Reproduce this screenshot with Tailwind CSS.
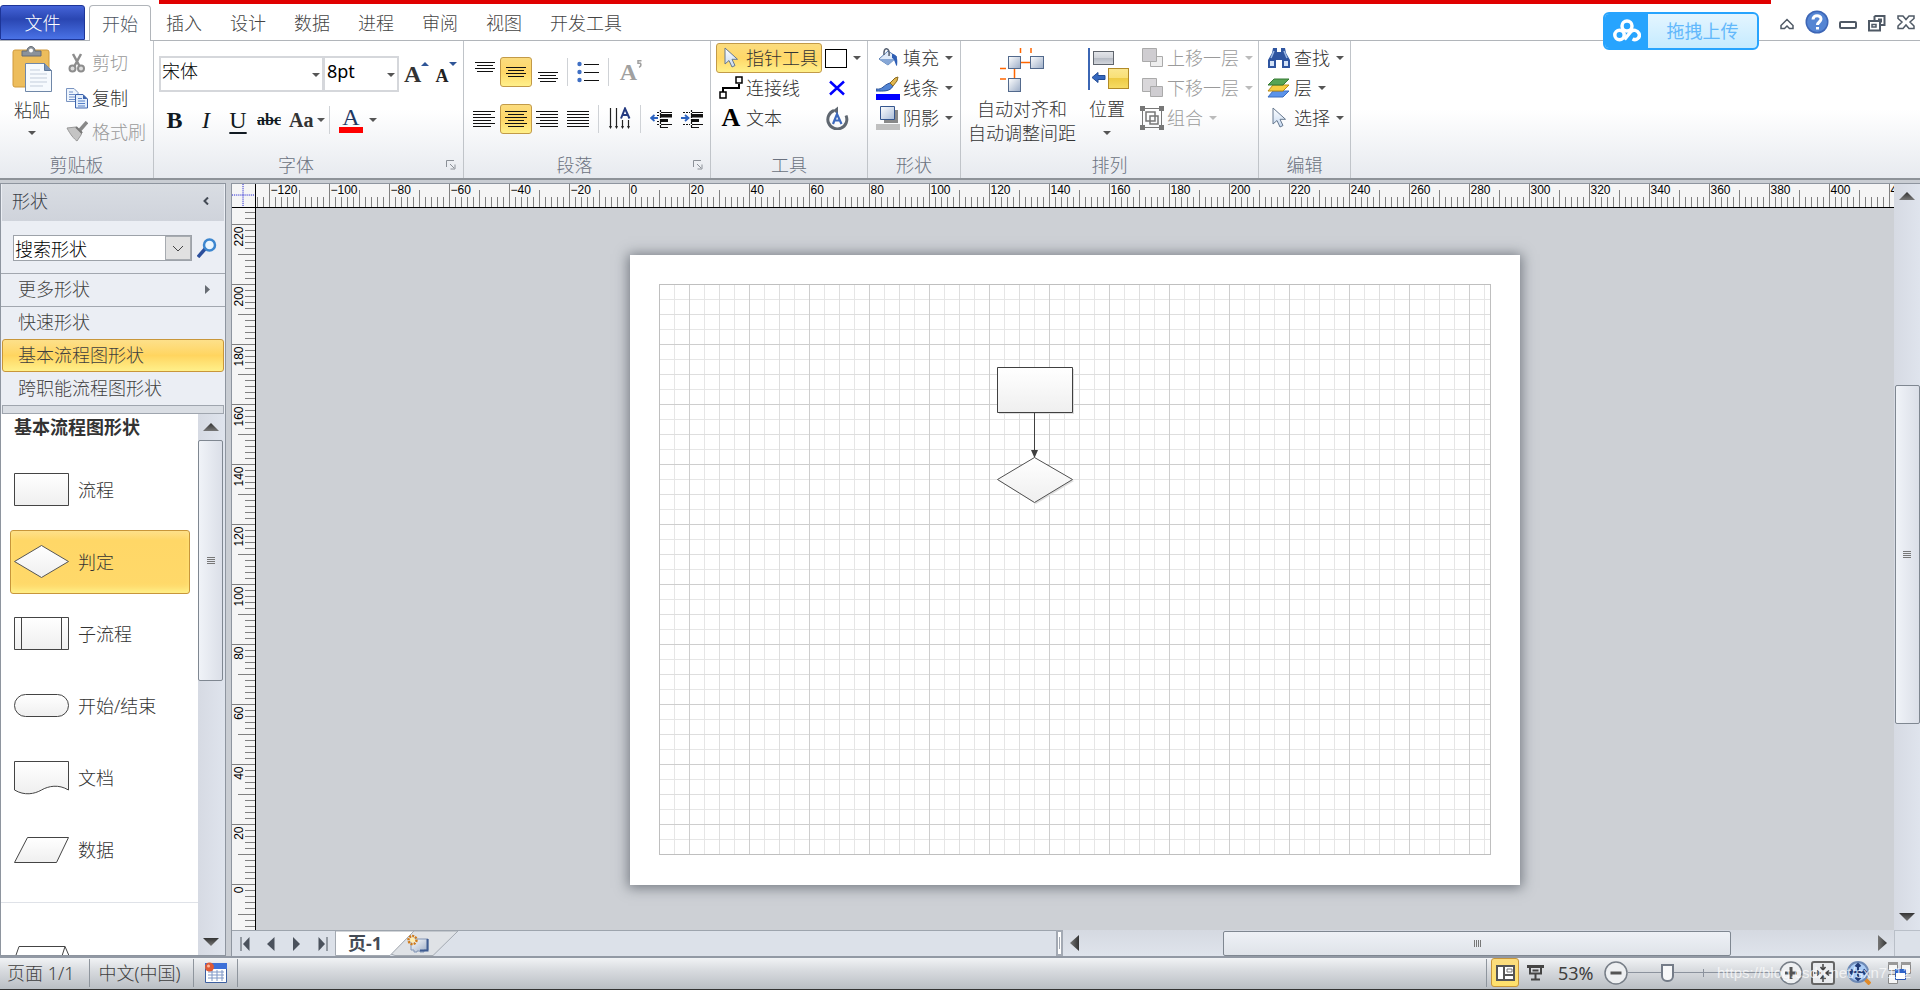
<!DOCTYPE html>
<html lang="zh-CN">
<head>
<meta charset="utf-8">
<title>Visio 流程图</title>
<script src="https://cdn.jsdelivr.net/npm/@tailwindcss/browser@4"></script>
</head>
<body class="relative flex h-screen flex-col overflow-hidden bg-white font-['Noto_Sans','Noto_Sans_CJK_SC',sans-serif] text-lg font-light leading-6 text-[#333]">

<svg class="absolute size-0" aria-hidden="true">
  <defs>
    <linearGradient id="gShape" x1="0" y1="0" x2="0" y2="1"><stop offset="0" stop-color="#fff"/><stop offset="1" stop-color="#efefef"/></linearGradient>
    <linearGradient id="gBlue" x1="0" y1="0" x2="1" y2="1"><stop offset="0" stop-color="#fff"/><stop offset="1" stop-color="#a9bcd8"/></linearGradient>
    <linearGradient id="gGray" x1="0" y1="0" x2="0" y2="1"><stop offset="0" stop-color="#e4e6ea"/><stop offset=".5" stop-color="#d0d3d9"/><stop offset=".5" stop-color="#b4b9c2"/><stop offset="1" stop-color="#d5d8dd"/></linearGradient>
    <linearGradient id="gCursor" x1="0" y1="0" x2="0" y2="1"><stop offset="0" stop-color="#fff"/><stop offset="1" stop-color="#c5d8f0"/></linearGradient>
    <linearGradient id="gGold" x1="0" y1="0" x2="0" y2="1"><stop offset="0" stop-color="#fbe78f"/><stop offset=".5" stop-color="#f8df74"/><stop offset=".5" stop-color="#eecb45"/><stop offset="1" stop-color="#f6dc66"/></linearGradient>
    <linearGradient id="gDarkH" x1="0" y1="0" x2="1" y2="0"><stop offset="0" stop-color="#777"/><stop offset="1" stop-color="#333"/></linearGradient>
    <linearGradient id="gDarkV" x1="0" y1="0" x2="0" y2="1"><stop offset="0" stop-color="#333"/><stop offset="1" stop-color="#777"/></linearGradient>
    <linearGradient id="gSq" x1="0" y1="0" x2="1" y2="1"><stop offset="0" stop-color="#fff"/><stop offset="1" stop-color="#9bacc6"/></linearGradient>
    <symbol id="dd" viewBox="0 0 8 4"><path d="M0 0h8L4 4z" fill="currentColor"/></symbol>
    <symbol id="cursor" viewBox="0 0 16 22"><path d="M2 1v16l4-3.500 3 6.500 3-1.500-3-6.200h5.500z" fill="url(#gCursor)" stroke="#66788f"/></symbol>
    <symbol id="launch" viewBox="0 0 10 10"><path d="M.5 7V.5H8M4 4l4 4M9 4.500V9H4.500" fill="none" stroke="#8b9097"/></symbol>
  </defs>
</svg>

<!-- Tab strip -->
<header class="flex h-[41px] shrink-0 items-end border-b border-[#b1b5ba] bg-white">
  <button class="h-[35px] w-[85px] self-end rounded-t-[3px] border border-[#1d3598] bg-linear-to-b from-[#4564d8] via-[#2a46b2] via-40% to-[#4a72e6] text-white">文件</button>
  <nav class="ml-1 flex items-end">
    <button class="-mb-px h-9 w-[62px] rounded-t-[4px] border border-b-0 border-[#b1b5ba] bg-white text-[#4d5561]">开始</button>
    <button class="ml-[15px] h-9 pt-0.5 text-[#444]">插入</button>
    <button class="ml-7 h-9 pt-0.5 text-[#444]">设计</button>
    <button class="ml-7 h-9 pt-0.5 text-[#444]">数据</button>
    <button class="ml-7 h-9 pt-0.5 text-[#444]">进程</button>
    <button class="ml-7 h-9 pt-0.5 text-[#444]">审阅</button>
    <button class="ml-7 h-9 pt-0.5 text-[#444]">视图</button>
    <button class="ml-7 h-9 pt-0.5 text-[#444]">开发工具</button>
  </nav>
  <div class="ml-auto flex h-9 items-center gap-[10px] pr-[5px]">
    <button aria-label="折叠功能区"><svg class="h-6 w-4" viewBox="0 0 16 24"><path d="M2 18.500v-3L8 9.500l6 6v3h-3.500L8 16l-2.500 2.500z" fill="#fff" stroke="#4f5965" stroke-width="1.500"/></svg></button>
    <button aria-label="帮助"><svg class="size-6" viewBox="0 0 24 24"><circle cx="12" cy="12" r="11.500" fill="#3d66b6"/><circle cx="12" cy="12" r="10" fill="#5585d3"/><path d="M8 9.500C8 4.500 16 4.500 16 9c0 3-3.500 3-3.500 6M12.500 17v2.500" fill="none" stroke="#fff" stroke-width="3"/></svg></button>
    <button aria-label="最小化"><svg class="h-6 w-[18px]" viewBox="0 0 18 24"><rect x="1" y="12" width="16" height="6" rx="1" fill="#fff" stroke="#4f5965" stroke-width="2"/></svg></button>
    <button aria-label="还原"><svg class="h-6 w-5" viewBox="0 0 20 24"><path d="M7.500 6h10v9h-4M7.500 6v5M11 9.500h3v3" fill="none" stroke="#4f5965" stroke-width="2"/><path d="M2 11h11v9.500H2z" fill="#fff" stroke="#4f5965" stroke-width="2"/><path d="M5 14.500h4v2.500H5z" fill="#fff" stroke="#4f5965" stroke-width="1.500"/></svg></button>
    <button aria-label="关闭"><svg class="h-6 w-[18px]" viewBox="0 0 18 24"><path d="M1 6h5l3 3.500L12 6h5v2.500L13 12l4 4v2.500h-5L9 15l-3 3.500H1V16l4-4-4-3.500z" fill="#fff" stroke="#4f5965" stroke-width="1.500"/></svg></button>
  </div>
</header>
<div class="absolute top-0 right-[149px] left-[159px] h-1 bg-[#e00000]"></div>
<button class="absolute top-3 right-[161px] flex h-[38px] w-[156px] items-center overflow-hidden rounded-md border-2 border-[#27a4fe] bg-linear-to-b from-[#e4f5ff] to-[#c5ebff] text-[#62b8fb]">
  <span class="flex h-full w-[43px] shrink-0 items-center justify-center bg-[#27a4fe]"><svg class="h-6 w-7" viewBox="0 0 28 24"><g fill="none" stroke="#fff" stroke-width="3.500"><circle cx="14" cy="7" r="5"/><circle cx="6.500" cy="16" r="4.700"/><path d="M11.500 20.500l6.500-8c2-2.200 6.500-1.500 8 2 1.500 4-2.500 7.500-6.500 5.500"/></g></svg></span>
  <span class="flex-1 text-center font-normal">拖拽上传</span>
</button>

<!-- Ribbon -->
<section class="flex h-[139px] shrink-0 border-b-2 border-[#8d9298] bg-linear-to-b from-white from-50% to-[#e7eaef]">
  <div class="flex w-[154px] shrink-0 flex-col border-r border-[#c0c4c9]">
    <div class="flex h-[110px] pt-[5px] pl-3">
      <button class="flex w-10 flex-col items-center">
        <svg class="h-[47px] w-[42px] shrink-0" viewBox="0 0 42 47"><rect x="2" y="4" width="36" height="37" rx="2" fill="#edbd5c" stroke="#d09a3c"/><path d="M11 10V5h5c0-6 8-6 8 0h6v5z" fill="#8b929b" stroke="#666d76"/><circle cx="20" cy="4.500" r="2" fill="#fff"/><path d="M14.500 17.500h19l7 7v21h-26z" fill="#f6fafe" stroke="#6f87a8"/><path d="M33.500 17.500v7h7" fill="#7b93b5" stroke="#5f7898"/><path d="M19 24h10M19 28h17M19 32h17M19 36h17M19 40h13" stroke="#c3cddb"/></svg>
        <span class="h-[34px] leading-[34px]">粘贴</span>
        <svg class="mt-1 h-1 w-2 text-[#555]"><use href="#dd"/></svg>
      </button>
      <div class="ml-[14px] flex flex-col text-[#9a9a9a]">
        <button class="flex h-[34px] items-center gap-1"><svg class="size-[22px]" viewBox="0 0 22 22"><path d="M7 2l6.500 12M15 2L8.500 14" stroke="#8d8d8d" stroke-width="2.500"/><circle cx="6.500" cy="16.500" r="3" fill="#ddd" stroke="#8d8d8d" stroke-width="2"/><circle cx="15" cy="16.500" r="3" fill="#ddd" stroke="#8d8d8d" stroke-width="2"/></svg>剪切</button>
        <button class="flex h-[35px] items-center gap-1 text-[#333]"><svg class="size-[22px]" viewBox="0 0 22 22"><path d="M.5 1.500H8l4 4v9H.5z" fill="#eef5fd" stroke="#7993c0"/><path d="M3 5h4M3 7.500h6M3 10h6M3 12.500h6" stroke="#6f8fc9"/><path d="M9.500 7.500H17l4.500 4.500v9h-12z" fill="#e3eefb" stroke="#3d64ad"/><path d="M17 7.500V12h4.500" fill="#3d64ad"/><path d="M12 11.500h4M12 14h7M12 16.500h7M12 19h7" stroke="#5780c8"/></svg>复制</button>
        <button class="flex h-[34px] items-center gap-1"><svg class="size-[22px]" viewBox="0 0 22 22"><path d="M21 1l-7 8" stroke="#888" stroke-width="3.500"/><path d="M1 7l9-1 6 5-1 3-4 6c-3-2-7-7-10-13z" fill="#c4c4c4" stroke="#999"/><path d="M10 6l6 6" stroke="#777" stroke-width="2"/></svg>格式刷</button>
      </div>
    </div>
    <div class="flex h-7 items-center justify-center pt-0.5 text-[#6b7280]">剪贴板</div>
  </div>

  <div class="flex w-[310px] shrink-0 flex-col border-r border-[#c0c4c9]">
    <div class="h-[110px] pt-[15px] pl-[5px]">
      <div class="flex text-black">
        <label class="relative"><select aria-label="字体" class="h-9 w-[165px] appearance-none border-2 border-[#d5d7db] bg-white pb-1.5 pl-px"><option>宋体</option></select><svg class="absolute top-[17px] right-1 h-1 w-2 text-[#555]"><use href="#dd"/></svg></label>
        <label class="relative -ml-px"><select aria-label="字号" class="h-9 w-[76px] appearance-none border-2 border-[#d5d7db] bg-white pb-1.5 pl-0.5 font-normal"><option>8pt</option></select><svg class="absolute top-[17px] right-1 h-1 w-2 text-[#555]"><use href="#dd"/></svg></label>
        <button class="ml-[5px] flex h-9 w-7 items-center font-['Liberation_Serif',serif] text-2xl font-bold text-[#333]">A<svg class="mb-5 h-1 w-2 rotate-180 text-[#2f5597]"><use href="#dd"/></svg></button>
        <button class="ml-1 flex h-9 w-7 items-center font-['Liberation_Serif',serif] text-lg font-bold text-[#222]"><span class="mt-1">A</span><svg class="mb-5 h-1 w-2 text-[#2f5597]"><use href="#dd"/></svg></button>
      </div>
      <div class="mt-[13px] flex h-[30px] items-center font-['Liberation_Serif',serif] text-2xl text-[#111a22]">
        <button class="w-[31px] font-bold">B</button><button class="w-8 font-normal italic">I</button><button class="w-8 font-normal underline underline-offset-4">U</button><button class="w-[30px] text-base font-bold line-through">abc</button>
        <button class="ml-[5px] flex w-10 items-center gap-1 text-xl font-bold text-[#333]">Aa<svg class="h-1 w-2 text-[#555]"><use href="#dd"/></svg></button>
        <span class="h-7 w-px bg-[#cfd2d6]"></span>
        <button class="ml-[9px] flex w-10 items-center gap-1.5"><span class="flex w-6 shrink-0 flex-col items-center border-b-[6px] border-[#f00] text-2xl leading-5 font-normal text-[#1f3864]">A</span><svg class="h-1 w-2 shrink-0 text-[#555]"><use href="#dd"/></svg></button>
      </div>
    </div>
    <div class="flex h-7 items-center pt-0.5 text-[#6b7280]"><span class="flex-1 pr-2 text-center">字体</span><button aria-label="字体设置" class="mr-[7px]"><svg class="size-[10px]"><use href="#launch"/></svg></button></div>
  </div>

  <div class="flex w-[247px] shrink-0 flex-col border-r border-[#c0c4c9]">
    <div class="h-[110px] pt-4 pl-[5px]">
      <div class="flex h-[30px] items-center">
        <button aria-label="顶端对齐" class="flex w-[31px] justify-center"><svg class="h-[22px] w-5" viewBox="0 0 20 22"><path d="M0 1.500h20M2 4.500h16M0 7.500h20M2 10.500h16" stroke="#111" stroke-width="1.200"/></svg></button>
        <button aria-label="中部对齐" class="flex h-[30px] w-8 items-center justify-center rounded-[3px] border border-[#c29a48] bg-linear-to-b from-[#fbdc7e] via-[#ffd767] to-[#fff08a]"><svg class="h-[22px] w-5" viewBox="0 0 20 22"><path d="M0 6.500h20M2 9.500h16M0 12.500h20M2 15.500h16" stroke="#111" stroke-width="1.200"/></svg></button>
        <button aria-label="底端对齐" class="flex w-[31px] justify-center"><svg class="h-[22px] w-5" viewBox="0 0 20 22"><path d="M0 11.500h20M2 14.500h16M0 17.500h20M2 20.500h16" stroke="#111" stroke-width="1.200"/></svg></button>
        <span class="mx-1 h-7 w-px bg-[#cfd2d6]"></span>
        <button aria-label="项目符号" class="flex w-8 justify-center"><svg class="h-[22px] w-[22px]" viewBox="0 0 22 22"><g fill="#3f6fc4"><circle cx="2.500" cy="3" r="2.200"/><circle cx="2.500" cy="11" r="2.200"/><circle cx="2.500" cy="19" r="2.200"/></g><path d="M7 3.500h15M7 11.500h15M7 19.500h15" stroke="#111" stroke-width="1.200"/></svg></button>
        <span class="mx-1 h-7 w-px bg-[#cfd2d6]"></span>
        <button aria-label="文字旋转" class="flex w-9 items-center justify-center font-['Liberation_Serif',serif] text-2xl font-bold text-[#a0a0a0]">A<svg class="mb-4 h-2 w-[5px]" viewBox="0 0 5 8"><path d="M4.500.8H1v2.500h2.500c1 2-.5 3.500-1.500 4" fill="none" stroke="#a0a0a0" stroke-width="1.500"/></svg></button>
      </div>
      <div class="mt-[17px] flex h-[30px] items-center">
        <button aria-label="左对齐" class="flex w-[31px] justify-center pr-0.5"><svg class="h-[18px] w-[22px]" viewBox="0 0 22 18"><path d="M0 1.500h22M0 4.500h18M0 7.500h22M0 10.500h18M0 13.500h22M0 16.500h18" stroke="#111" stroke-width="1.200"/></svg></button>
        <button aria-label="居中" class="flex h-[30px] w-8 items-center justify-center rounded-[3px] border border-[#c29a48] bg-linear-to-b from-[#fbdc7e] via-[#ffd767] to-[#fff08a]"><svg class="h-[18px] w-[22px]" viewBox="0 0 22 18"><path d="M0 1.500h22M3 4.500h16M0 7.500h22M3 10.500h16M0 13.500h22M3 16.500h16" stroke="#111" stroke-width="1.200"/></svg></button>
        <button aria-label="右对齐" class="flex w-[31px] justify-center pr-0.5"><svg class="h-[18px] w-[22px]" viewBox="0 0 22 18"><path d="M0 1.500h22M4 4.500h18M0 7.500h22M4 10.500h18M0 13.500h22M4 16.500h18" stroke="#111" stroke-width="1.200"/></svg></button>
        <button aria-label="两端对齐" class="flex w-[31px] justify-center pr-0.5"><svg class="h-[18px] w-[22px]" viewBox="0 0 22 18"><path d="M0 1.500h22M0 4.500h22M0 7.500h22M0 10.500h22M0 13.500h22M0 16.500h22" stroke="#111" stroke-width="1.200"/></svg></button>
        <span class="mx-1 h-7 w-px bg-[#cfd2d6]"></span>
        <button aria-label="文字方向" class="flex w-[33px] justify-center"><svg class="h-6 w-[22px]" viewBox="0 0 22 24"><path d="M1.500 1v20M7.500 1v20M13.500 13v8M19.500 13v8" stroke="#222" stroke-width="1.200"/><path d="M0 19h3l-1.500 3zM6 19h3l-1.500 3zM12 19h3l-1.500 3zM18 19h3l-1.500 3z" fill="#222"/><path d="M12 11.500l4-10 4.500 10M13.500 8h5" fill="none" stroke="#243a80" stroke-width="2"/></svg></button>
        <span class="mx-1 h-7 w-px bg-[#cfd2d6]"></span>
        <button aria-label="减少缩进" class="flex w-[31px] justify-center"><svg class="h-[18px] w-[22px]" viewBox="0 0 22 18"><path d="M7 2.500h2M7 14.500h2M7 11.500h2M7 5.500h2M10.500 0v18" stroke="#111" stroke-width="1.200" stroke-dasharray="2 1"/><path d="M11 2.500h11M11 14.500h11M10 17.500h8" stroke="#111"/><path d="M10 4h12v3.500H10zM10 9h8v3h-8z" fill="#111"/><path d="M8 8H2M4.500 5L1 8l3.500 3" stroke="#2c63c0" stroke-width="1.800" fill="none"/></svg></button>
        <button aria-label="增加缩进" class="flex w-[31px] justify-center"><svg class="h-[18px] w-[22px]" viewBox="0 0 22 18"><path d="M2 2.500h7M2 14.500h7M10.500 0v18" stroke="#111" stroke-width="1.200" stroke-dasharray="2 1"/><path d="M11 2.500h11M11 14.500h11M10 17.500h8" stroke="#111"/><path d="M10 4h12v3.500H10zM10 9h8v3h-8z" fill="#111"/><path d="M0 8h6M4 5l3.500 3L4 11" stroke="#2c63c0" stroke-width="1.800" fill="none"/></svg></button>
      </div>
    </div>
    <div class="flex h-7 items-center pt-0.5 text-[#6b7280]"><span class="flex-1 pr-2 text-center">段落</span><button aria-label="段落设置" class="mr-[7px]"><svg class="size-[10px]"><use href="#launch"/></svg></button></div>
  </div>

  <div class="flex w-[157px] shrink-0 flex-col border-r border-[#c0c4c9]">
    <div class="flex h-[110px] gap-[3px] pt-0.5 pl-[5px]">
      <div class="flex w-[106px] flex-col">
        <button class="flex h-[30px] items-center gap-[3px] rounded-[3px] border border-[#c29a48] bg-linear-to-b from-[#fbdc7e] via-[#ffd767] to-[#fff08a] pl-0.5"><svg class="h-[22px] w-6"><use href="#cursor"/></svg>指针工具</button>
        <button class="flex h-[30px] items-center gap-[3px] pl-[3px]"><svg class="size-6" viewBox="0 0 24 24"><path d="M4 16v-4h16V8" fill="none" stroke="#000" stroke-width="2"/><rect x="1" y="16" width="6" height="6" fill="#fff" stroke="#000" stroke-width="1.500"/><rect x="17" y="1" width="6" height="6" fill="#fff" stroke="#000" stroke-width="1.500"/></svg>连接线</button>
        <button class="flex h-[30px] items-center gap-[3px] pl-[3px]"><span class="w-6 text-center font-['Liberation_Serif',serif] text-[26px] font-bold text-black">A</span>文本</button>
      </div>
      <div class="flex flex-col">
        <button aria-label="矩形" class="flex h-[30px] items-center gap-1.5"><span class="h-[19px] w-[22px] border border-black bg-white"></span><svg class="h-1 w-2 text-[#555]"><use href="#dd"/></svg></button>
        <button aria-label="连接点" class="flex h-[30px] w-6 items-center justify-center"><svg class="size-4" viewBox="0 0 16 16"><path d="M1 1.500l14 13M15 1.500l-14 13" stroke="#00f" stroke-width="2.500"/></svg></button>
        <button aria-label="旋转文本" class="flex h-[30px] w-6 items-center justify-center"><svg class="size-6" viewBox="0 0 24 24"><path d="M9 4.500a9.500 9.500 0 1 0 12 5" fill="none" stroke="#5f6770" stroke-width="3"/><path d="M8 4.500l5-4v8z" fill="#5f6770"/><path d="M8 18l4-10 4.500 10M9.500 14.500h5.500" fill="none" stroke="#3c69bd" stroke-width="2.200"/></svg></button>
      </div>
    </div>
    <div class="flex h-7 items-center justify-center pt-0.5 text-[#6b7280]">工具</div>
  </div>

  <div class="flex w-[93px] shrink-0 flex-col border-r border-[#c0c4c9]">
    <div class="flex h-[110px] flex-col pt-0.5 pl-2">
      <button class="flex h-[30px] items-center gap-[3px]"><svg class="size-6" viewBox="0 0 24 24"><path d="M3 13l9-8 9 6-9 8z" fill="#dfeaf8" stroke="#5b7fb4"/><path d="M3 13h16l-7 6z" fill="#86a7d6"/><path d="M8 9c-1-9 6-8 5 1" fill="none" stroke="#555f70" stroke-width="1.500"/><path d="M16 8c5 0 6 5 5 12-2-1-2-7-5-8z" fill="#2f5fb5"/></svg>填充<svg class="ml-[3px] h-1 w-2 text-[#555]"><use href="#dd"/></svg></button>
      <button class="flex h-[30px] items-center gap-[3px]"><svg class="size-6" viewBox="0 0 24 24"><path d="M0 13c7 1 7-4 14-6l3 3c-3 6-10 5-17 5z" fill="#5184d3" stroke="#2b5298"/><path d="M14 7l5-5 3-1-1 4-4 5z" fill="#e0b64f" stroke="#8a6a20"/><path d="M0 18h24v6H0z" fill="#00f"/></svg>线条<svg class="ml-[3px] h-1 w-2 text-[#555]"><use href="#dd"/></svg></button>
      <button class="flex h-[30px] items-center gap-[3px]"><svg class="size-6" viewBox="0 0 24 24"><path d="M8 4h14v13H8z" fill="#888"/><path d="M4.500.5h14v13h-14z" fill="url(#gBlue)" stroke="#35568f"/><path d="M0 18h24v6H0z" fill="#c0c0c0"/></svg>阴影<svg class="ml-[3px] h-1 w-2 text-[#555]"><use href="#dd"/></svg></button>
    </div>
    <div class="flex h-7 items-center justify-center pt-0.5 text-[#6b7280]">形状</div>
  </div>

  <div class="flex w-[298px] shrink-0 flex-col border-r border-[#c0c4c9]">
    <div class="flex h-[110px] pl-[7px]">
      <button class="flex w-[108px] flex-col items-center pt-[7px]">
        <svg class="mb-1 h-[45px] w-[44px] shrink-0" viewBox="0 0 44 45"><path d="M20.500 0v5M31 0v5M20 14.500h10M14.500 20v10M0 20.500h6M0 31h6" stroke="#f60" stroke-width="1.500"/><g fill="url(#gSq)" stroke="#52698c"><rect x="8.500" y="8.500" width="12" height="12"/><rect x="30.500" y="8.500" width="13" height="12"/><rect x="8.500" y="30.500" width="12" height="13"/></g></svg>
        <span>自动对齐和</span><span class="whitespace-nowrap">自动调整间距</span>
      </button>
      <button class="ml-[9px] flex w-11 flex-col items-center pt-[7px]">
        <svg class="mb-[7px] ml-1 h-[42px] w-[42px] shrink-0" viewBox="0 0 42 42"><path d="M1 0v42" stroke="#3b66b4" stroke-width="2"/><rect x="5.500" y="3.500" width="20" height="13" fill="url(#gGray)" stroke="#60656d"/><rect x="20.500" y="20.500" width="20" height="20" fill="url(#gGold)" stroke="#b18a28"/><path d="M4 29.500l6-5v3h7v4h-7v3z" fill="#3568bf" stroke="#234c94"/></svg>
        <span>位置</span><svg class="mt-[10px] h-1 w-2 shrink-0 text-[#555]"><use href="#dd"/></svg>
      </button>
      <div class="ml-[11px] flex flex-col pt-0.5 text-[#9a9a9a]">
        <button class="flex h-[30px] items-center gap-[3px]"><svg class="size-6" viewBox="0 0 24 24"><path d="M10.500 10.500h12v10h-12z" fill="#eee" stroke="#aaa"/><path d="M2.500 2.500h14v13h-14z" fill="#cfcdd1" stroke="#aaa"/></svg>上移一层<svg class="ml-[3px] h-1 w-2 text-[#bbb]"><use href="#dd"/></svg></button>
        <button class="flex h-[30px] items-center gap-[3px]"><svg class="size-6" viewBox="0 0 24 24"><path d="M2.500 2.500h14v13h-14z" fill="#d9d7da" stroke="#aaa"/><path d="M10.500 10.500h12v10h-12z" fill="#cfcdd1" stroke="#aaa"/></svg>下移一层<svg class="ml-[3px] h-1 w-2 text-[#bbb]"><use href="#dd"/></svg></button>
        <button class="flex h-[30px] items-center gap-[3px]"><svg class="size-6" viewBox="0 0 24 24"><path d="M2.500 2.500h19v19h-19z" fill="none" stroke="#777"/><path d="M6 6h9v9H6zM10 10h8v8h-8z" fill="none" stroke="#777" stroke-width="1.500"/><path d="M0 0h5v5H0zM19 0h5v5h-5zM0 19h5v5H0zM19 19h5v5h-5z" fill="#777"/></svg>组合<svg class="ml-[3px] h-1 w-2 text-[#bbb]"><use href="#dd"/></svg></button>
      </div>
    </div>
    <div class="flex h-7 items-center justify-center pt-0.5 text-[#6b7280]">排列</div>
  </div>

  <div class="flex w-[92px] shrink-0 flex-col border-r border-[#c0c4c9]">
    <div class="flex h-[110px] flex-col pt-0.5 pl-2">
      <button class="flex h-[30px] items-center gap-[3px]"><svg class="size-6" viewBox="0 0 24 24"><path d="M6 2h4v4h4V2h4l1 5 4 7v8h-8v-8H9v8H1v-8l4-7z" fill="#2f55a0"/><path d="M3 15h4v5H3zM17 15h4v5h-4z" fill="#d4e3f7"/><path d="M7 5l-3 7M17 5l3 7" stroke="#9db9e4" stroke-width="1.500"/></svg>查找<svg class="ml-[3px] h-1 w-2 text-[#555]"><use href="#dd"/></svg></button>
      <button class="flex h-[30px] items-center gap-[3px]"><svg class="size-6" viewBox="0 0 24 24"><path d="M6 15h16l-6 6H1z" fill="#5b93ea" stroke="#3a6cc0"/><path d="M6 9h16l-6 6H1z" fill="#f6cd42" stroke="#b98b16"/><path d="M7 3h15l-6 6H1z" fill="#58a455" stroke="#347a34"/></svg>层<svg class="ml-[3px] h-1 w-2 text-[#555]"><use href="#dd"/></svg></button>
      <button class="flex h-[30px] items-center gap-[3px]"><svg class="h-[22px] w-6"><use href="#cursor"/></svg>选择<svg class="ml-[3px] h-1 w-2 text-[#555]"><use href="#dd"/></svg></button>
    </div>
    <div class="flex h-7 items-center justify-center pt-0.5 text-[#6b7280]">编辑</div>
  </div>
</section>

<!-- Work area -->
<main class="flex min-h-0 flex-1 gap-[5px] bg-[#c9cdd3] pt-[3px]">
  <aside class="flex w-[226px] shrink-0 flex-col border border-[#8e959f] bg-[#ebeef4]">
    <div class="mx-px flex h-[37px] shrink-0 items-center justify-between bg-linear-to-b from-[#d9dde3] to-[#cfd3db] pr-[15px] pb-1 pl-[10px] text-[#3b4048]">形状<button aria-label="最小化形状窗口"><svg class="h-2 w-1.5" viewBox="0 0 6 8"><path d="M5 .5L1.500 4 5 7.500" fill="none" stroke="#444b55" stroke-width="2"/></svg></button></div>
    <div class="flex h-[53px] shrink-0 items-center border-b border-[#a2a7af] pt-0.5 pl-3">
      <div class="flex h-[26px] w-[179px] border border-[#9da2a9] bg-white">
        <input aria-label="搜索形状" value="搜索形状" class="min-w-0 flex-1 bg-white pt-0.5 pl-px text-black outline-none">
        <button aria-label="展开" class="flex w-[26px] items-center justify-center border border-[#a7abb0] bg-[#e1e1e1]"><svg class="h-[7px] w-3" viewBox="0 0 12 7"><path d="M1 1l5 5 5-5" fill="none" stroke="#444"/></svg></button>
      </div>
      <button aria-label="搜索" class="ml-[5px]"><svg class="size-5" viewBox="0 0 20 20"><path d="M1 19l7-8" stroke="#2b4f9c" stroke-width="3.500"/><circle cx="12.500" cy="7" r="5.500" fill="#eaf6ff" stroke="#3c86cf" stroke-width="2.500"/></svg></button>
    </div>
    <button class="flex h-[33px] shrink-0 items-center justify-between border-b border-[#a2a7af] pr-[15px] pb-0.5 pl-[17px] text-[#3f3f3f]">更多形状<svg class="h-[9px] w-[5px]" viewBox="0 0 5 9"><path d="M0 0v9l5-4.500z" fill="#666b72"/></svg></button>
    <button class="h-8 shrink-0 pb-0.5 pl-[17px] text-left text-[#3f3f3f]">快速形状</button>
    <button class="mx-px h-[33px] shrink-0 rounded-[3px] border border-[#c8963a] bg-linear-to-b from-[#fde08a] via-[#ffd55f] to-[#fff08a] pb-0.5 pl-[15px] text-left text-[#3f3f3f]">基本流程图形状</button>
    <button class="h-[33px] shrink-0 pb-0.5 pl-[17px] text-left text-[#3f3f3f]">跨职能流程图形状</button>
    <div class="mx-px h-[9px] shrink-0 border border-[#9fa5ae] bg-[#dadee4]"></div>
    <div class="flex min-h-0 flex-1">
      <div class="flex w-[197px] flex-col overflow-hidden bg-white">
        <h2 class="mb-[18px] h-[26px] shrink-0 pl-[13px] leading-[26px] font-bold">基本流程图形状</h2>
        <div class="flex shrink-0 flex-col gap-2 pl-[9px]">
          <button class="flex h-16 w-[180px] items-center gap-[7px] pl-1"><svg class="h-[35px] w-[57px]" viewBox="0 0 57 35"><path d="M.5.5h54v32H.5z" fill="url(#gShape)" stroke="#444"/></svg>流程</button>
          <button class="flex h-16 w-[180px] items-center gap-[7px] rounded-[3px] border border-[#c8963a] bg-linear-to-b from-[#fee08a] via-[#ffd767] via-15% to-[#ffd96a] pl-[3px] shadow-[inset_0_-6px_6px_-2px_#fff08a]"><svg class="h-[35px] w-[57px]" viewBox="0 0 57 35"><path d="M27.500.5l27 16-27 16-27-16z" fill="url(#gShape)" stroke="#555"/></svg>判定</button>
          <button class="flex h-16 w-[180px] items-center gap-[7px] pl-1"><svg class="h-[35px] w-[57px]" viewBox="0 0 57 35"><path d="M.5.5h54v32H.5zM7.500.5v32M47.500.5v32" fill="url(#gShape)" stroke="#444"/></svg>子流程</button>
          <button class="flex h-16 w-[180px] items-center gap-[7px] pl-1"><svg class="h-[35px] w-[57px]" viewBox="0 0 57 35"><rect x=".5" y="5.500" width="54" height="22" rx="11" fill="url(#gShape)" stroke="#444"/></svg>开始/结束</button>
          <button class="flex h-16 w-[180px] items-center gap-[7px] pl-1"><svg class="h-[35px] w-[57px]" viewBox="0 0 57 35"><path d="M.5.5h54v28.500c-10-6-20-4-27 0s-17 6-27 0z" fill="url(#gShape)" stroke="#444"/></svg>文档</button>
          <button class="flex h-16 w-[180px] items-center gap-[7px] pl-1"><svg class="h-[35px] w-[57px]" viewBox="0 0 57 35"><path d="M13.500 4.500h41l-12 25H.5z" fill="url(#gShape)" stroke="#444"/></svg>数据</button>
        </div>
        <div class="mt-5 shrink-0 border-t border-[#dfe2e8] pt-[43px] pl-[13px]"><svg class="h-[35px] w-[57px]" viewBox="0 0 57 35"><path d="M1 12L5 .5h46L56 12M51 .5L48 10" fill="none" stroke="#444"/></svg></div>
      </div>
      <div class="flex flex-1 flex-col items-center bg-linear-to-r from-[#d6dae3] to-[#dfe4ed]">
        <button aria-label="向上滚动" class="flex h-[26px] shrink-0 items-center pr-0.5"><svg class="h-2 w-4" viewBox="0 0 16 8"><path d="M8 0l8 8H0z" fill="url(#gDarkV)"/></svg></button>
        <div class="mr-0.5 flex h-[241px] w-[25px] shrink-0 flex-col items-center justify-center gap-px rounded-[2px] border border-[#7f8791] bg-linear-to-r from-[#f0f3f8] to-[#dbdfe8]"><span class="h-px w-2 bg-[#777]"></span><span class="h-px w-2 bg-[#777]"></span><span class="h-px w-2 bg-[#777]"></span><span class="h-px w-2 bg-[#777]"></span></div>
        <button aria-label="向下滚动" class="mt-auto flex h-[26px] shrink-0 items-center pr-0.5"><svg class="h-2 w-4" viewBox="0 0 16 8"><path d="M8 8l8-8H0z" fill="url(#gDarkV)"/></svg></button>
      </div>
    </div>
  </aside>

  <section class="flex min-w-0 flex-1 flex-col border-t border-l border-[#8e959f]">
    <div class="flex min-h-0 flex-1">
      <div class="flex w-6 shrink-0 flex-col">
        <svg class="h-6 w-6 shrink-0 border-r border-b border-black bg-[#f5f5f5]" viewBox="0 0 24 24"><path d="M11.500 0v23M0 11.500h23" stroke="#00c" stroke-dasharray="1 1"/></svg>
        <svg id="vruler" class="min-h-0 w-6 flex-1 border-r border-black bg-[#f5f5f5] font-['Liberation_Sans',sans-serif] text-xs font-normal"></svg>
      </div>
      <div class="flex min-w-0 flex-1 flex-col">
        <svg id="hruler" class="h-6 w-full shrink-0 border-b border-black bg-[#f5f5f5] font-['Liberation_Sans',sans-serif] text-xs font-normal"></svg>
        <div class="flex min-h-0 flex-1 items-center justify-center overflow-hidden bg-[#cdd0d5] pt-0.5">
          <svg class="h-[630px] w-[890px] shrink-0 bg-white shadow-[0_1px_12px_2px_rgba(60,66,76,0.6)]" viewBox="0 0 890 630">
            <defs>
              <pattern id="grid" x="59" y="29" width="60" height="60" patternUnits="userSpaceOnUse">
                <path d="M15.500 0v60M45.500 0v60M0 15.500h60M0 45.500h60" stroke="#e6e6e6"/>
                <path d="M30.500 0v60M0 30.500h60" stroke="#dedede"/>
                <path d="M.5 0v60M0 .5h60" stroke="#cecece"/>
              </pattern>
            </defs>
            <rect x="29.500" y="29.500" width="831" height="570" fill="url(#grid)" stroke="#bfbfbf"/>
            <path d="M369 114h75v45h-75z" fill="#ddd"/>
            <path d="M367.500 112.500h75v45h-75z" fill="url(#gShape)" stroke="#404040"/>
            <path d="M404.500 158v40" stroke="#404040"/>
            <path d="M401 195h7l-3.500 8z" fill="#404040"/>
            <path d="M406 204l38 22-38 23-37-23z" fill="#ddd"/>
            <path d="M404.500 202.500l38 22-38 23-37-23z" fill="url(#gShape)" stroke="#505050"/>
          </svg>
        </div>
      </div>
      <div class="flex w-[26px] shrink-0 flex-col items-center bg-linear-to-r from-[#d6dae3] to-[#dfe4ed]">
        <button aria-label="向上滚动" class="flex h-6 shrink-0 items-center"><svg class="h-2 w-4" viewBox="0 0 16 8"><path d="M8 0l8 8H0z" fill="url(#gDarkV)"/></svg></button>
        <div class="mt-[177px] flex h-[339px] w-[25px] shrink-0 flex-col items-center justify-center gap-px rounded-[2px] border border-[#7f8791] bg-linear-to-r from-[#f0f3f8] to-[#dbdfe8]"><span class="h-px w-2 bg-[#777]"></span><span class="h-px w-2 bg-[#777]"></span><span class="h-px w-2 bg-[#777]"></span><span class="h-px w-2 bg-[#777]"></span></div>
        <button aria-label="向下滚动" class="mt-auto flex h-[26px] shrink-0 items-center"><svg class="h-2 w-4" viewBox="0 0 16 8"><path d="M8 8l8-8H0z" fill="url(#gDarkV)"/></svg></button>
      </div>
    </div>

    <!-- Page tabs and horizontal scroll bar -->
    <div class="flex h-[26px] shrink-0 bg-[#dce1e9]">
      <div class="flex w-[824px] shrink-0 border-t border-[#9da4ad]">
        <button aria-label="第一页" class="flex w-[26px] items-center justify-center"><svg class="h-[14px] w-[10px]" viewBox="0 0 10 14"><path d="M1 0v14" stroke="#4b525d"/><path d="M9.500 0v14L3 7z" fill="#4b525d"/></svg></button>
        <button aria-label="上一页" class="flex w-[26px] items-center justify-center"><svg class="h-[14px] w-2" viewBox="0 0 8 14"><path d="M7.500 0v14L0 7z" fill="#4b525d"/></svg></button>
        <button aria-label="下一页" class="flex w-[26px] items-center justify-center"><svg class="h-[14px] w-2" viewBox="0 0 8 14"><path d="M0 0v14l7-7z" fill="#4b525d"/></svg></button>
        <button aria-label="最后一页" class="flex w-[25px] items-center justify-center"><svg class="h-[14px] w-[10px]" viewBox="0 0 10 14"><path d="M9 0v14" stroke="#4b525d"/><path d="M.5 0v14L7 7z" fill="#4b525d"/></svg></button>
        <div class="relative flex w-[124px]">
          <svg class="absolute inset-0 h-[25px] w-[124px]" viewBox="0 0 124 25"><path d="M60 24.500h38L123 0H79L56 23z" fill="#dfe2e6" stroke="#a3a9b1"/><path d="M.5 0v24.500H55L79 0z" fill="#fff" stroke="#a3a9b1"/></svg>
          <button class="relative w-[60px] pb-0.5 font-bold text-[#444b55]">页-1</button>
          <button aria-label="插入页" class="relative ml-3"><svg class="h-[22px] w-6" viewBox="0 0 24 22"><path d="M4 6h17v11h-4v2h-4v-1h-3v1H7v-2H4z" fill="url(#gSq)" stroke="#8295b5"/><path d="M20.500 6v11.500H13" fill="none" stroke="#3f5c91" stroke-width="2"/><circle cx="5.500" cy="7" r="4" fill="none" stroke="#d07a18" stroke-width="2.500" stroke-dasharray="2 1"/><circle cx="5.500" cy="7" r="2.500" fill="#ffeeb0"/></svg></button>
        </div>
      </div>
      <div class="flex w-[7px] shrink-0 items-center justify-center border-2 border-[#a3a9b3] bg-white"><span class="h-3 w-px bg-[#a3a9b3]"></span></div>
      <div class="flex min-w-0 flex-1 items-center justify-between bg-linear-to-b from-[#d5d9e1] to-[#dfe4ec] px-[7px]">
        <button aria-label="向左滚动"><svg class="h-4 w-[9px]" viewBox="0 0 9 16"><path d="M9 0v16L0 8z" fill="url(#gDarkH)"/></svg></button>
        <div class="ml-[142px] flex h-[25px] w-[508px] items-center justify-center gap-px rounded-[2px] border border-[#7f8791] bg-linear-to-b from-[#eef1f6] to-[#dfe3e9]"><span class="h-[7px] w-px bg-[#777]"></span><span class="h-[7px] w-px bg-[#777]"></span><span class="h-[7px] w-px bg-[#777]"></span><span class="h-[7px] w-px bg-[#777]"></span></div>
        <button aria-label="向右滚动" class="ml-[145px]"><svg class="h-4 w-[9px]" viewBox="0 0 9 16"><path d="M0 0v16l9-8z" fill="url(#gDarkH)"/></svg></button>
      </div>
      <div class="w-[26px] shrink-0 border-t border-l border-[#b9bfc8]"></div>
    </div>
  </section>
</main>

<!-- Status bar -->
<footer class="relative flex h-[34px] shrink-0 items-center border-t-2 border-b border-t-[#9299a4] border-b-[#333] bg-linear-to-b from-[#f1f3f5] via-[#d8dbdf] via-40% to-[#babfc4] pb-0.5 text-[#3f3f3f]">
  <span class="pl-[7px]">页面 1/1</span>
  <span class="ml-[15px] h-7 w-px bg-[#8e959d]"></span>
  <button class="ml-2">中文(中国)</button>
  <span class="ml-3 h-7 w-px bg-[#8e959d]"></span>
  <button aria-label="宏录制" class="ml-[10px]"><svg class="h-[22px] w-[23px]" viewBox="0 0 23 22"><path d="M1.500 1.500h21v19h-21z" fill="#fff" stroke="#3c5fa0"/><path d="M1 1h22v6H1z" fill="#3d70d8"/><path d="M4 10h16M4 13h16M4 16h16M8 8v11M13 8v11M18 8v11" stroke="#7f97c6"/><circle cx="5.500" cy="5" r="4.500" fill="#de5a35"/><circle cx="4.500" cy="4" r="1.500" fill="#ffb79e"/></svg></button>
  <span class="ml-[10px] h-7 w-px bg-[#8e959d]"></span>
  <div class="ml-auto flex h-full items-center pr-[9px]">
    <span class="h-7 w-px bg-[#8e959d]"></span>
    <button aria-label="普通视图" class="ml-1 flex h-[29px] w-7 items-center justify-center rounded-[3px] border border-[#c8963a] bg-linear-to-b from-[#fbdc7e] to-[#ffe16b]"><svg class="h-4 w-[19px]" viewBox="0 0 19 16"><path d="M1 1h17v14H1zM8 1v14M8 10h10" fill="#fff" stroke="#555" stroke-width="2"/><path d="M11 4h5v3h-5z" fill="none" stroke="#777"/></svg></button>
    <button aria-label="全屏显示" class="ml-[5px] flex w-[22px] justify-center"><svg class="h-4 w-[17px]" viewBox="0 0 17 16"><path d="M0 1.500h17" stroke="#444" stroke-width="3"/><path d="M3 3v5.500h11V3M5.500 5.500h6M8.500 9v5M4 14.500h9" fill="none" stroke="#444" stroke-width="2"/></svg></button>
    <button class="ml-3 w-[46px] text-left font-normal">53%</button>
    <button aria-label="缩小"><svg class="size-6" viewBox="0 0 24 24"><circle cx="12" cy="12" r="11" fill="#eef0f2" stroke="#777e87" stroke-width="1.500"/><path d="M6.500 12h11" stroke="#555" stroke-width="3"/></svg></button>
    <input type="range" aria-label="显示比例" min="0" max="100" value="24" class="h-5 w-[151px] appearance-none bg-[linear-gradient(#8b929d,#8b929d),linear-gradient(#8b929d,#8b929d)] bg-[length:100%_1px,1px_8px] bg-center bg-no-repeat [&::-webkit-slider-thumb]:h-[18px] [&::-webkit-slider-thumb]:w-[13px] [&::-webkit-slider-thumb]:appearance-none [&::-webkit-slider-thumb]:rounded-b-[6px] [&::-webkit-slider-thumb]:border-2 [&::-webkit-slider-thumb]:border-[#747c88] [&::-webkit-slider-thumb]:bg-[#f7f8f9]">
    <button aria-label="放大"><svg class="size-6" viewBox="0 0 24 24"><circle cx="12" cy="12" r="11" fill="#eef0f2" stroke="#777e87" stroke-width="1.500"/><path d="M6 12h12M12 6v12" stroke="#555" stroke-width="3"/></svg></button>
    <button aria-label="适应窗口" class="ml-2"><svg class="size-6" viewBox="0 0 24 24"><rect x="1" y="1" width="22" height="22" rx="2" fill="#e9ebee" stroke="#666" stroke-width="2"/><path d="M12 3v5M12 16v5M3 12h5M16 12h5M9.500 6l2.500 3 2.500-3M9.500 18l2.500-3 2.500 3M6 9.500L9 12l-3 2.500M18 9.500L15 12l3 2.500" fill="none" stroke="#444" stroke-width="1.500"/></svg></button>
    <button aria-label="平移和缩放" class="ml-3"><svg class="size-6" viewBox="0 0 24 24"><path d="M17 17l6 6" stroke="#e08a28" stroke-width="4"/><circle cx="11" cy="11" r="10" fill="#a9cbf5" stroke="#6d89b5" stroke-width="2"/><path d="M11 3v16M3 11h16M8.500 5.500L11 3l2.500 2.500M8.500 16.500L11 19l2.500-2.500M5.500 8.500L3 11l2.500 2.500M16.500 8.500L19 11l-2.500 2.500" fill="none" stroke="#223c78" stroke-width="2"/></svg></button>
    <button aria-label="切换窗口" class="ml-4"><svg class="size-6" viewBox="0 0 24 24"><g stroke="#888" fill="#f6f6f6"><path d="M1.500 1.500h9v8h-9zM14.500 1.500h9v11h-9zM1.500 13.500h9v9h-9z"/></g><path d="M1 1h10v3H1zM14 1h10v3H14z" fill="#999"/><path d="M8.500 8.500h10v10h-10z" fill="#fff" stroke="#2b57b0"/><path d="M8 8h11v4H8z" fill="#2f62c8"/></svg></button>
  </div>
  <div class="pointer-events-none absolute right-[9px] font-['Liberation_Sans',sans-serif] text-[15px] leading-4 font-normal text-white/70">https://blog.csdn.net/sxn7112</div>
</footer>

<script>
  // Ruler scale: 3px per millimetre, a tick every 2mm, a label every 20mm.
  const NS = 'http://www.w3.org/2000/svg';
  const h = document.getElementById('hruler');
  const v = document.getElementById('vruler');
  function add(parent, name, attrs, text) {
    const el = document.createElementNS(NS, name);
    for (const key in attrs) el.setAttribute(key, attrs[key]);
    if (text !== undefined) el.textContent = text;
    parent.appendChild(el);
  }
  function label(mm) {
    return mm < 0 ? '\u2212' + -mm : String(mm);
  }
  function tickStart(mm) {
    return mm % 20 === 0 ? 0 : mm % 10 === 0 ? 6 : 13;
  }
  // The bars around the canvas take 282px of the window's width and 268px of its height.
  function drawRulers() {
    h.replaceChildren();
    v.replaceChildren();
    const width = window.innerWidth - 282;
    const height = window.innerHeight - 268;
    let d = '';
    for (let mm = -124; 373.5 + mm * 3 < width; mm += 2) {
      const x = 373.5 + mm * 3;
      d += `M${x} ${tickStart(mm)}V23`;
      if (mm % 20 === 0) add(h, 'text', { x: x + 1, y: 10 }, label(mm));
    }
    add(h, 'path', { d, stroke: '#808080' });
    d = '';
    for (let mm = 224; 676.5 - mm * 3 < height; mm -= 2) {
      const y = 676.5 - mm * 3;
      d += `M${tickStart(mm)} ${y}H23`;
      if (mm % 20 === 0) add(v, 'text', { transform: `translate(11 ${y + 2}) rotate(-90)`, 'text-anchor': 'end' }, label(mm));
    }
    add(v, 'path', { d, stroke: '#808080' });
  }
  drawRulers();
  addEventListener('resize', drawRulers);
</script>
</body>
</html>
